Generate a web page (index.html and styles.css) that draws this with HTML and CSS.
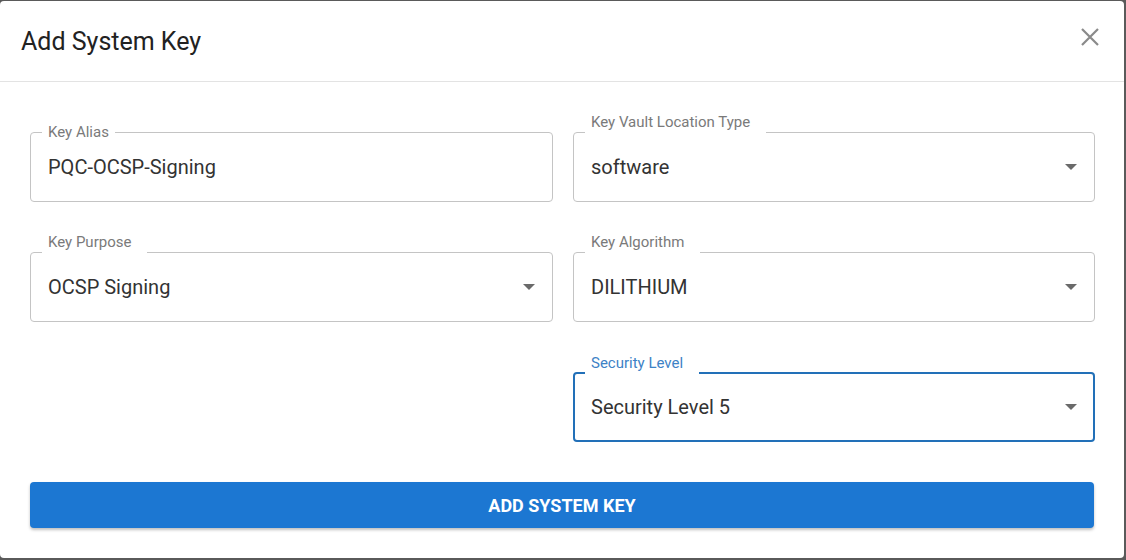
FILE: index.html
```html
<!DOCTYPE html>
<html lang="en">

<head>
    <meta charset="UTF-8" />
    <meta name="viewport" content="width=device-width, initial-scale=1.0" />
    <title>Add System Key</title>
    <link rel="stylesheet" href="styles.css">
</head>

<body>
    <div class="dialog">
        <!-- 标题栏 -->
        <div class="dialog-head">
            <h2>Add System Key</h2>
            <span class="close">
                <svg width="20" height="20" viewBox="0 0 20 20">
                    <path d="M2 2 L18 18 M18 2 L2 18" stroke="#8a8a8a" stroke-width="2.2" fill="none" />
                </svg>
            </span>
        </div>

        <!-- 表单 -->
        <div class="dialog-body">
            <div class="grid">
                <div class="field">
                    <span class="label">Key Alias</span>
                    <span class="value">PQC-OCSP-Signing</span>
                </div>
                <div class="field select">
                    <span class="label up">Key Vault Location Type</span>
                    <span class="value">software</span>
                    <i class="arrow"></i>
                </div>
                <div class="field select">
                    <span class="label up">Key Purpose</span>
                    <span class="value">OCSP Signing</span>
                    <i class="arrow"></i>
                </div>
                <div class="field select">
                    <span class="label up">Key Algorithm</span>
                    <span class="value">DILITHIUM</span>
                    <i class="arrow"></i>
                </div>
                <div class="empty"></div>
                <div class="field select focus">
                    <span class="label up">Security Level</span>
                    <span class="value">Security Level 5</span>
                    <i class="arrow"></i>
                </div>
            </div>
            <button class="submit">ADD SYSTEM KEY</button>
        </div>
    </div>
</body>

</html>
```

FILE: styles.css
```css
* {
    margin: 0;
    padding: 0;
    box-sizing: border-box;
}

body {
    background: #5a5a5a;
    padding: 1px 2px 2px 0;
    font-family: Roboto, "Liberation Sans", sans-serif;
}

.dialog {
    height: 557px;
    background: #fff;
    border-radius: 4px;
}

.dialog-head {
    height: 81px;
    border-bottom: 1px solid #e3e3e3;
    display: flex;
    align-items: center;
    justify-content: space-between;
    padding: 0 24px 0 21px;
}

.dialog-head h2 {
    font-size: 25px;
    font-weight: 400;
    color: #222;
}

.close {
    display: flex;
    margin-top: -8px;
}

.dialog-body {
    padding: 50px 30px 0 30px;
}

.grid {
    display: grid;
    grid-template-columns: 523px 522px;
    column-gap: 20px;
    row-gap: 50px;
}

.field {
    position: relative;
    height: 70px;
    border: 1px solid #c4c4c4;
    border-radius: 4px;
    display: flex;
    align-items: center;
    padding: 0 17px;
}

.field .label {
    position: absolute;
    left: 11px;
    top: -11px;
    padding: 0 6px;
    background: #fff;
    font-size: 15px;
    line-height: 20px;
    color: #7a7a7a;
}

.field .label.up {
    top: -23px;
    padding: 2px 16px 10px 6px;
}

.field .value {
    font-size: 20px;
    color: #333;
}

.field .arrow {
    position: absolute;
    right: 17px;
    top: 31px;
    width: 0;
    height: 0;
    border-left: 6px solid transparent;
    border-right: 6px solid transparent;
    border-top: 6px solid #6a6a6a;
}

.field.focus {
    border: 2px solid #2270b8;
    padding: 0 16px;
}

.field.focus .label {
    left: 10px;
    color: #3d82c6;
}

.field.focus .arrow {
    right: 16px;
    top: 30px;
}

.submit {
    display: block;
    width: 100%;
    height: 46px;
    margin-top: 40px;
    border: none;
    border-radius: 4px;
    background: #1c77d2;
    color: #fff;
    font: 700 18px Roboto, "Liberation Sans", sans-serif;
    box-shadow: 0 2px 3px rgba(0, 0, 0, 0.25);
}
```
